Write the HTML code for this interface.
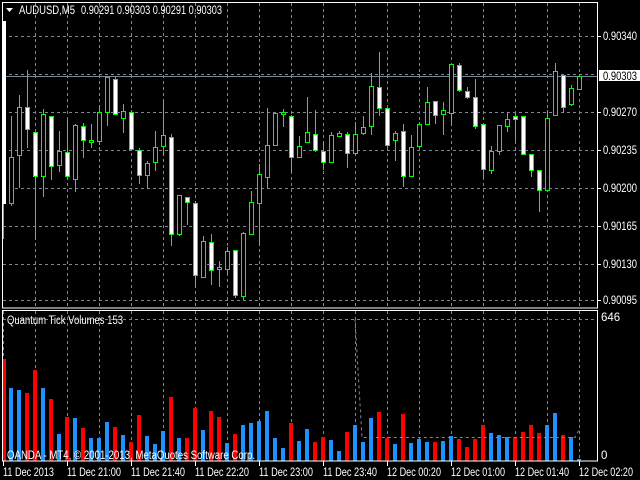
<!DOCTYPE html>
<html><head><meta charset="utf-8"><style>
html,body{margin:0;padding:0;background:#000;}
svg{display:block;font-family:"Liberation Sans",sans-serif;font-size:11.5px;}
</style></head><body>
<svg width="640" height="480" viewBox="0 0 640 480" xmlns="http://www.w3.org/2000/svg">
<rect width="640" height="480" fill="#000"/>
<g stroke="#778899" stroke-width="1" stroke-dasharray="3,3" fill="none">
<path d="M3 36.5H597M3 74.5H597M3 112.5H597M3 150.5H597M3 188.5H597M3 226.5H597M3 264.5H597M3 300.5H597"/>
<path d="M35.5 3V308M67.5 3V308M99.5 3V308M131.5 3V308M163.5 3V308M195.5 3V308M227.5 3V308M259.5 3V308M291.5 3V308M323.5 3V308M355.5 3V308M387.5 3V308M419.5 3V308M451.5 3V308M483.5 3V308M515.5 3V308M547.5 3V308M579.5 3V308"/>
<path d="M3 319.5H597"/>
<path d="M3.5 311V461M35.5 311V461M67.5 311V461M99.5 311V461M131.5 311V461M163.5 311V461M195.5 311V461M227.5 311V461M259.5 311V461M291.5 311V461M323.5 311V461M355.5 311V461M387.5 311V461M419.5 311V461M451.5 311V461M483.5 311V461M515.5 311V461M547.5 311V461M579.5 311V461"/>
</g>
<path d="M3 76.5H597" stroke="#778899" stroke-width="1"/>
<path stroke="#00ff00" stroke-width="1" fill="none" d="M3.5 204V239M11.5 116V206M19.5 95V188M27.5 70V148M35.5 132V240M43.5 109V197M51.5 116V180M59.5 131V172M67.5 120V178M75.5 124V192M83.5 123V158M91.5 124V148M99.5 105V145M107.5 77V126M115.5 77V114M123.5 104V133M131.5 110V150M139.5 148V184M147.5 161V189M155.5 131V171M163.5 100V156M171.5 134V246M179.5 195V236M187.5 197V225M195.5 201V288M203.5 236V278M211.5 234V285M219.5 261V287M227.5 247V274M235.5 250V298M243.5 232V300M251.5 191V235M259.5 164V246M267.5 108V188M275.5 113V146M283.5 109V127M291.5 115V172M299.5 136V157M307.5 97V143M315.5 110V152M323.5 141V170M331.5 132V162M339.5 131V136M347.5 132V168M355.5 122V155M363.5 116V135M371.5 73V135M379.5 52V116M387.5 107V147M395.5 131V161M403.5 124V187M411.5 135V177M419.5 122V148M427.5 87V125M435.5 101V124M443.5 102V135M451.5 64V126M459.5 63V92M467.5 87V99M475.5 79V129M483.5 124V178M491.5 146V174M499.5 125V155M507.5 112V132M515.5 113V142M523.5 116V155M531.5 154V177M539.5 170V212M547.5 110V190M555.5 63V115M563.5 75V112M571.5 85V106M579.5 76V89"/>
<rect x="3" y="21" width="3" height="183" fill="#fff"/>
<g stroke="#00ff00" stroke-width="1">
<g fill="#000">
<rect x="9.5" y="157.5" width="4" height="46"/>
<rect x="17.5" y="107.5" width="4" height="48"/>
<rect x="41.5" y="114.5" width="4" height="62"/>
<rect x="57.5" y="151.5" width="4" height="14"/>
<rect x="73.5" y="125.5" width="4" height="54"/>
<rect x="89.5" y="140.5" width="4" height="2"/>
<rect x="97.5" y="112.5" width="4" height="29"/>
<rect x="105.5" y="77.5" width="4" height="35"/>
<rect x="121.5" y="111.5" width="4" height="7"/>
<rect x="145.5" y="163.5" width="4" height="12"/>
<rect x="153.5" y="147.5" width="4" height="15"/>
<rect x="161.5" y="135.5" width="4" height="11"/>
<rect x="177.5" y="195.5" width="4" height="39"/>
<rect x="201.5" y="241.5" width="4" height="36"/>
<rect x="217.5" y="267.5" width="4" height="2"/>
<rect x="225.5" y="251.5" width="4" height="18"/>
<rect x="241.5" y="233.5" width="4" height="63"/>
<rect x="249.5" y="202.5" width="4" height="32"/>
<rect x="257.5" y="174.5" width="4" height="29"/>
<rect x="265.5" y="145.5" width="4" height="32"/>
<rect x="273.5" y="113.5" width="4" height="32"/>
<rect x="281.5" y="112.5" width="4" height="2"/>
<rect x="297.5" y="146.5" width="4" height="11"/>
<rect x="305.5" y="132.5" width="4" height="10"/>
<rect x="329.5" y="135.5" width="4" height="27"/>
<rect x="337.5" y="133.5" width="4" height="3"/>
<rect x="353.5" y="134.5" width="4" height="19"/>
<rect x="361.5" y="127.5" width="4" height="6"/>
<rect x="369.5" y="86.5" width="4" height="40"/>
<rect x="393.5" y="133.5" width="4" height="7"/>
<rect x="409.5" y="147.5" width="4" height="29"/>
<rect x="417.5" y="124.5" width="4" height="22"/>
<rect x="425.5" y="102.5" width="4" height="22"/>
<rect x="441.5" y="110.5" width="4" height="4"/>
<rect x="449.5" y="64.5" width="4" height="49"/>
<rect x="489.5" y="151.5" width="4" height="19"/>
<rect x="497.5" y="125.5" width="4" height="26"/>
<rect x="505.5" y="119.5" width="4" height="7"/>
<rect x="545.5" y="118.5" width="4" height="72"/>
<rect x="553.5" y="71.5" width="4" height="44"/>
<rect x="569.5" y="88.5" width="4" height="16"/>
<rect x="577.5" y="76.5" width="4" height="13"/>
</g>
<g fill="#fff">
<rect x="25.5" y="107.5" width="4" height="22"/>
<rect x="33.5" y="132.5" width="4" height="44"/>
<rect x="49.5" y="116.5" width="4" height="50"/>
<rect x="65.5" y="152.5" width="4" height="24"/>
<rect x="81.5" y="126.5" width="4" height="14"/>
<rect x="113.5" y="79.5" width="4" height="35"/>
<rect x="129.5" y="112.5" width="4" height="37"/>
<rect x="137.5" y="150.5" width="4" height="25"/>
<rect x="169.5" y="137.5" width="4" height="97"/>
<rect x="185.5" y="197.5" width="4" height="5"/>
<rect x="193.5" y="203.5" width="4" height="72"/>
<rect x="209.5" y="242.5" width="4" height="28"/>
<rect x="233.5" y="250.5" width="4" height="45"/>
<rect x="289.5" y="116.5" width="4" height="41"/>
<rect x="313.5" y="134.5" width="4" height="16"/>
<rect x="321.5" y="151.5" width="4" height="11"/>
<rect x="345.5" y="134.5" width="4" height="19"/>
<rect x="377.5" y="87.5" width="4" height="21"/>
<rect x="385.5" y="108.5" width="4" height="37"/>
<rect x="401.5" y="131.5" width="4" height="45"/>
<rect x="433.5" y="101.5" width="4" height="14"/>
<rect x="457.5" y="65.5" width="4" height="25"/>
<rect x="465.5" y="91.5" width="4" height="6"/>
<rect x="473.5" y="97.5" width="4" height="29"/>
<rect x="481.5" y="124.5" width="4" height="45"/>
<rect x="513.5" y="116.5" width="4" height="3"/>
<rect x="521.5" y="116.5" width="4" height="38"/>
<rect x="529.5" y="154.5" width="4" height="16"/>
<rect x="537.5" y="170.5" width="4" height="20"/>
<rect x="561.5" y="75.5" width="4" height="32"/>
</g>
</g>
<g fill="#ff0000">
<rect x="2" y="359" width="4" height="102"/>
<rect x="25" y="393" width="4" height="68"/>
<rect x="33" y="370" width="4" height="91"/>
<rect x="49" y="399" width="4" height="62"/>
<rect x="65" y="417" width="4" height="44"/>
<rect x="81" y="428" width="4" height="33"/>
<rect x="113" y="427" width="4" height="34"/>
<rect x="129" y="442" width="4" height="19"/>
<rect x="137" y="415" width="4" height="46"/>
<rect x="169" y="397" width="4" height="64"/>
<rect x="185" y="438" width="4" height="23"/>
<rect x="193" y="408" width="4" height="53"/>
<rect x="209" y="411" width="4" height="50"/>
<rect x="217" y="417" width="4" height="44"/>
<rect x="233" y="434" width="4" height="27"/>
<rect x="289" y="423" width="4" height="38"/>
<rect x="313" y="442" width="4" height="19"/>
<rect x="321" y="437" width="4" height="24"/>
<rect x="345" y="432" width="4" height="29"/>
<rect x="377" y="412" width="4" height="49"/>
<rect x="385" y="438" width="4" height="23"/>
<rect x="401" y="414" width="4" height="47"/>
<rect x="433" y="442" width="4" height="19"/>
<rect x="457" y="439" width="4" height="22"/>
<rect x="465" y="447" width="4" height="14"/>
<rect x="473" y="439" width="4" height="22"/>
<rect x="481" y="425" width="4" height="36"/>
<rect x="513" y="437" width="4" height="24"/>
<rect x="521" y="432" width="4" height="29"/>
<rect x="529" y="425" width="4" height="36"/>
<rect x="537" y="433" width="4" height="28"/>
<rect x="561" y="435" width="4" height="26"/>
</g>
<g fill="#1e90ff">
<rect x="9" y="388" width="4" height="73"/>
<rect x="17" y="390" width="4" height="71"/>
<rect x="41" y="388" width="4" height="73"/>
<rect x="57" y="434" width="4" height="27"/>
<rect x="73" y="418" width="4" height="43"/>
<rect x="89" y="438" width="4" height="23"/>
<rect x="97" y="438" width="4" height="23"/>
<rect x="105" y="422" width="4" height="39"/>
<rect x="121" y="435" width="4" height="26"/>
<rect x="145" y="436" width="4" height="25"/>
<rect x="153" y="444" width="4" height="17"/>
<rect x="161" y="431" width="4" height="30"/>
<rect x="177" y="438" width="4" height="23"/>
<rect x="201" y="430" width="4" height="31"/>
<rect x="225" y="443" width="4" height="18"/>
<rect x="241" y="425" width="4" height="36"/>
<rect x="249" y="423" width="4" height="38"/>
<rect x="257" y="421" width="4" height="40"/>
<rect x="265" y="411" width="4" height="50"/>
<rect x="273" y="438" width="4" height="23"/>
<rect x="281" y="448" width="4" height="13"/>
<rect x="297" y="441" width="4" height="20"/>
<rect x="305" y="429" width="4" height="32"/>
<rect x="329" y="440" width="4" height="21"/>
<rect x="337" y="451" width="4" height="10"/>
<rect x="353" y="425" width="4" height="36"/>
<rect x="361" y="442" width="4" height="19"/>
<rect x="369" y="418" width="4" height="43"/>
<rect x="393" y="444" width="4" height="17"/>
<rect x="409" y="443" width="4" height="18"/>
<rect x="417" y="439" width="4" height="22"/>
<rect x="425" y="442" width="4" height="19"/>
<rect x="441" y="441" width="4" height="20"/>
<rect x="449" y="436" width="4" height="25"/>
<rect x="489" y="433" width="4" height="28"/>
<rect x="497" y="435" width="4" height="26"/>
<rect x="505" y="437" width="4" height="24"/>
<rect x="545" y="425" width="4" height="36"/>
<rect x="553" y="413" width="4" height="48"/>
<rect x="569" y="437" width="4" height="24"/>
<rect x="577" y="459" width="4" height="2"/>
</g>
<path d="M355 319.5L362 437.5H575L580 428" stroke="#778899" stroke-dasharray="3,3" fill="none"/>
<g stroke="#fff" stroke-width="1" fill="none">
<rect x="2.5" y="2.5" width="595" height="305.5"/>
<rect x="2.5" y="310.5" width="595" height="150.5"/>
<path d="M598 36.5H601M598 112.5H601M598 150.5H601M598 188.5H601M598 226.5H601M598 264.5H601M598 300.5H601"/>
<path d="M3.5 461V466M67.5 461V466M131.5 461V466M195.5 461V466M259.5 461V466M323.5 461V466M387.5 461V466M451.5 461V466M515.5 461V466M579.5 461V466"/>
</g>
<path d="M6 8H13L9.5 12Z" fill="#fff"/>
<g fill="#fff">
<text x="19" y="14" textLength="56" lengthAdjust="spacingAndGlyphs">AUDUSD,M5</text>
<text x="81" y="14" textLength="141" lengthAdjust="spacingAndGlyphs">0.90291 0.90303 0.90291 0.90303</text>
<text x="603" y="40" textLength="34" lengthAdjust="spacingAndGlyphs">0.90340</text>
<text x="603" y="116" textLength="34" lengthAdjust="spacingAndGlyphs">0.90270</text>
<text x="603" y="154" textLength="34" lengthAdjust="spacingAndGlyphs">0.90235</text>
<text x="603" y="192" textLength="34" lengthAdjust="spacingAndGlyphs">0.90200</text>
<text x="603" y="230" textLength="34" lengthAdjust="spacingAndGlyphs">0.90165</text>
<text x="603" y="268" textLength="34" lengthAdjust="spacingAndGlyphs">0.90130</text>
<text x="603" y="304" textLength="34" lengthAdjust="spacingAndGlyphs">0.90095</text>
<text x="601" y="321">646</text>
<text x="601" y="459">0</text>
<text x="7" y="324" textLength="116" lengthAdjust="spacingAndGlyphs">Quantum Tick Volumes 153</text>
<text x="7" y="459" textLength="248" lengthAdjust="spacingAndGlyphs">OANDA - MT4, © 2001-2013, MetaQuotes Software Corp.</text>
<text x="3" y="476" textLength="51" lengthAdjust="spacingAndGlyphs">11 Dec 2013</text>
<text x="67" y="476" textLength="54" lengthAdjust="spacingAndGlyphs">11 Dec 21:00</text>
<text x="131" y="476" textLength="54" lengthAdjust="spacingAndGlyphs">11 Dec 21:40</text>
<text x="195" y="476" textLength="54" lengthAdjust="spacingAndGlyphs">11 Dec 22:20</text>
<text x="259" y="476" textLength="54" lengthAdjust="spacingAndGlyphs">11 Dec 23:00</text>
<text x="323" y="476" textLength="54" lengthAdjust="spacingAndGlyphs">11 Dec 23:40</text>
<text x="387" y="476" textLength="54" lengthAdjust="spacingAndGlyphs">12 Dec 00:20</text>
<text x="451" y="476" textLength="54" lengthAdjust="spacingAndGlyphs">12 Dec 01:00</text>
<text x="515" y="476" textLength="54" lengthAdjust="spacingAndGlyphs">12 Dec 01:40</text>
<text x="579" y="476" textLength="54" lengthAdjust="spacingAndGlyphs">12 Dec 02:20</text>
</g>
<rect x="599" y="70" width="41" height="11" fill="#fff"/>
<text x="603" y="80" fill="#000" textLength="34" lengthAdjust="spacingAndGlyphs">0.90303</text>
</svg>
</body></html>
